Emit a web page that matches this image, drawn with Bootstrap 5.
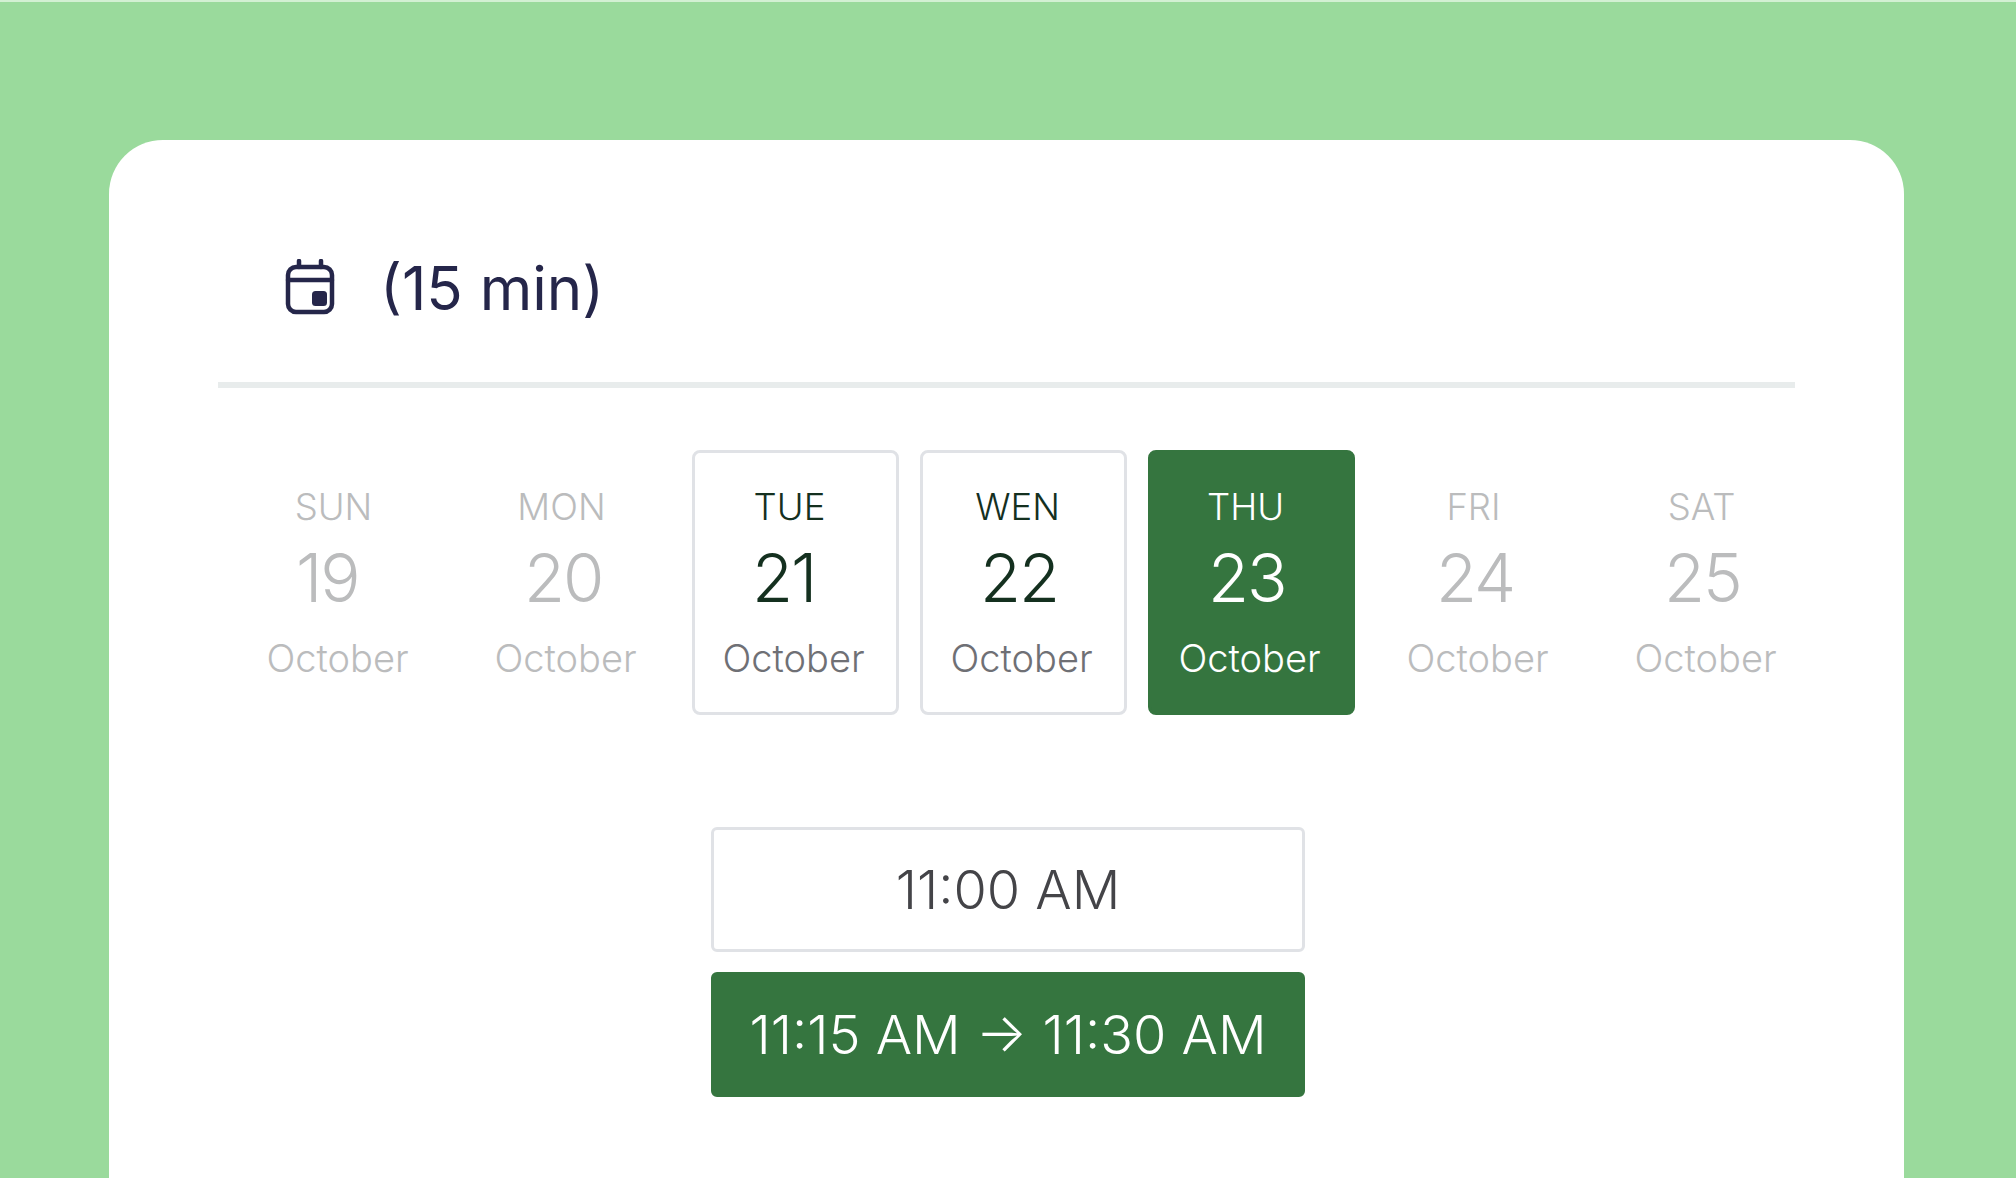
<!DOCTYPE html>
<html lang="en">
<head>
  <meta charset="UTF-8">
  <title>Schedule</title>
  <link rel="stylesheet" href="https://cdn.jsdelivr.net/npm/bootstrap@5.3.0/dist/css/bootstrap.min.css">
  <style>
    html, body { height: 100%; }
    body {
      background: #9ada9c;
      border-top: 2px solid #d3f0d3;
      font-family: "Inter", "Liberation Sans", sans-serif;
      overflow: hidden;
    }
    .page-wrap { padding: 138px 112px 0 109px; height: 100%; }
    .sheet {
      background: #fff;
      border-radius: 54px 54px 0 0;
      height: 100%;
      padding: 0 109px;
    }
    .sheet-head {
      height: 248px;
      padding: 53px 0 0 67px;
      gap: 45px;
      color: #25264a;
      font-size: 60px;
      font-weight: 400;
      border-bottom: 6px solid #e8ecec;
    }
    .sheet-head svg { width: 50px; height: 56px; margin-top: -2px; }
    .day-row { gap: 21px; margin: 62px -16px 0 18px; }
    .day-cell {
      flex: 0 0 207px;
      height: 265px;
      border: 3px solid transparent;
      border-radius: 8px;
      color: #bbbcbd;
      padding-top: 32px;
    }
    .day-cell.is-open { border-color: #e0e2e6; color: #14301f; }
    .day-cell.is-open .day-month { color: #6f7075; }
    .day-cell.is-picked { background: #35753f; border-color: #35753f; color: #fff; }
    .day-name { font-size: 36.5px; font-weight: 300; line-height: 44px; padding-right: 12px; }
    .day-num { font-size: 67px; font-weight: 300; line-height: 78px; letter-spacing: -2px; padding: 10px 0 0 57px; }
    .day-month { font-size: 38px; font-weight: 300; line-height: 44px; margin-top: 19px; padding-right: 4px; }
    .time-col { width: 594px; margin: 112px 0 0 3px; gap: 20px; }
    .time-btn {
      height: 125px;
      border: 3px solid #e0e2e6;
      border-radius: 6px;
      background: #fff;
      color: #444448;
      font-size: 54px;
      font-weight: 350;
    }
    .time-btn.is-picked { background: #35753f; border-color: #35753f; color: #fff; }
  </style>
</head>
<body>
  <div class="page-wrap">
    <div class="sheet">
      <div class="sheet-head d-flex align-items-center">
        <svg viewBox="0 0 50 56" fill="none" stroke="#25264a" stroke-width="4.5" stroke-linecap="round">
          <rect x="3" y="8" width="44" height="45" rx="8"/>
          <path d="M3 21H47M14 2V8M36 2V8"/>
          <rect x="27" y="32" width="15" height="15" rx="3.5" fill="#25264a" stroke="none"/>
        </svg>
        <span>(15 min)</span>
      </div>

      <div class="day-row d-flex">
        <div class="day-cell text-center"><div class="day-name">SUN</div><div class="day-num text-start">19</div><div class="day-month">October</div></div>
        <div class="day-cell text-center"><div class="day-name">MON</div><div class="day-num text-start">20</div><div class="day-month">October</div></div>
        <div class="day-cell text-center is-open"><div class="day-name">TUE</div><div class="day-num text-start">21</div><div class="day-month">October</div></div>
        <div class="day-cell text-center is-open"><div class="day-name">WEN</div><div class="day-num text-start">22</div><div class="day-month">October</div></div>
        <div class="day-cell text-center is-picked"><div class="day-name">THU</div><div class="day-num text-start">23</div><div class="day-month">October</div></div>
        <div class="day-cell text-center"><div class="day-name">FRI</div><div class="day-num text-start">24</div><div class="day-month">October</div></div>
        <div class="day-cell text-center"><div class="day-name">SAT</div><div class="day-num text-start">25</div><div class="day-month">October</div></div>
      </div>

      <div class="d-flex justify-content-center">
        <div class="time-col d-flex flex-column">
          <button type="button" class="time-btn">11:00 AM</button>
          <button type="button" class="time-btn is-picked">11:15 AM → 11:30 AM</button>
        </div>
      </div>
    </div>
  </div>
  <script src="https://cdn.jsdelivr.net/npm/bootstrap@5.3.0/dist/js/bootstrap.bundle.min.js"></script>
</body>
</html>
